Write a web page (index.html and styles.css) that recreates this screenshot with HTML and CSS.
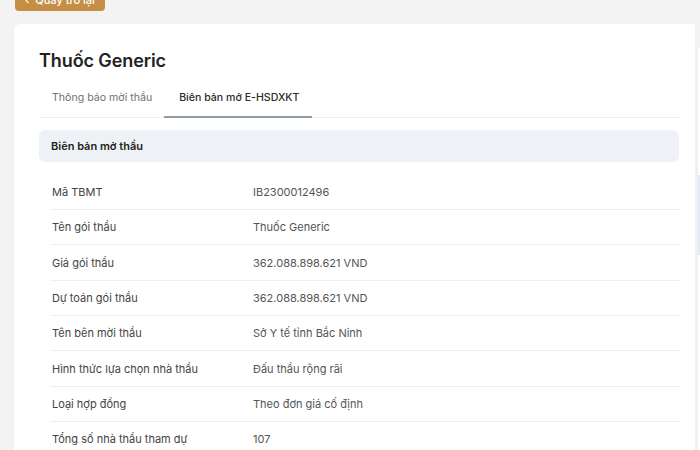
FILE: index.html
```html
<!DOCTYPE html>
<html>
<head>
    <title>Thuốc Generic - Biên bản mở thầu</title>
    <link rel="stylesheet" href="styles.css">
</head>
<body>
    <div class="page">
        <button class="back">&lsaquo;&nbsp; Quay trở lại</button>

        <div class="layout">
            <div class="card">
                <h1>Thuốc Generic</h1>

                <div class="tabs">
                    <div class="tab">Thông báo mời thầu</div>
                    <div class="tab active">Biên bản mở E-HSDXKT</div>
                </div>

                <div class="section-head">Biên bản mở thầu</div>

                <div class="rows">
                    <div class="row"><span class="label">Mã TBMT</span><span class="value">IB2300012496</span></div>
                    <div class="row"><span class="label">Tên gói thầu</span><span class="value">Thuốc Generic</span></div>
                    <div class="row"><span class="label">Giá gói thầu</span><span class="value">362.088.898.621 VND</span></div>
                    <div class="row"><span class="label">Dự toán gói thầu</span><span class="value">362.088.898.621 VND</span></div>
                    <div class="row"><span class="label">Tên bên mời thầu</span><span class="value">Sở Y tế tỉnh Bắc Ninh</span></div>
                    <div class="row"><span class="label">Hình thức lựa chọn nhà thầu</span><span class="value">Đấu thầu rộng rãi</span></div>
                    <div class="row"><span class="label">Loại hợp đồng</span><span class="value">Theo đơn giá cố định</span></div>
                    <div class="row"><span class="label">Tổng số nhà thầu tham dự</span><span class="value">107</span></div>
                </div>
            </div>

            <div class="aside">
                <div class="aside-box"></div>
            </div>
        </div>
    </div>
</body>
</html>
```

FILE: styles.css
```css
body { margin: 0; background: #f3f3f3; font-family: Inter, "Noto Sans", sans-serif; color: #333; overflow: hidden; }
.page { padding-left: 14px; }
.back { display: block; margin: -17px 0 0 1px; width: 90px; height: 28px; background: #c48e45; color: #fff; border: none; border-radius: 4px; font-family: inherit; font-size: 11px; font-weight: 500; text-align: left; padding: 6px 10px 0 10px; }
.layout { display: flex; gap: 2px; margin-top: 13px; align-items: flex-start; }
.card { flex: 0 0 681px; background: #fff; border-radius: 6px 0 0 0; padding: 25px 0 0 25px; box-sizing: border-box; height: 440px; box-shadow: 0 0 3px rgba(0,0,0,0.03); }
h1 { margin: 0; font-size: 18px; line-height: 24px; font-weight: 600; color: #222; letter-spacing: -0.1px; }
.tabs { display: flex; margin-top: 6.5px; width: 641px; border-bottom: 1px solid #eeeff1; }
.tab { padding: 10px 12px 10px 13px; font-size: 10.6px; line-height: 16px; color: #707070; border-bottom: 2px solid transparent; margin-bottom: -1px; }
.tab.active { color: #2c2c2c; font-weight: 500; border-bottom-color: #8e9aa6; padding: 10px 12px 10px 15px; }
.section-head { margin-top: 12px; width: 640px; height: 32px; box-sizing: border-box; background: #eef2f6; border-radius: 6px; padding-left: 12px; display: flex; align-items: center; font-size: 11px; font-weight: 600; color: #222; }
.rows { margin: 13.4px 0 0 11px; width: 630px; }
.row { display: flex; align-items: center; height: 35.3px; box-sizing: border-box; border-bottom: 1px solid #efefef; font-size: 11px; }
.label { width: 201px; padding-left: 2px; color: #444; }
.value { color: #555; }
.aside { flex: 0 0 200px; margin-top: 24px; height: 420px; background: #fff; border-left: 1px solid #ececec; }
.aside-box { margin-top: 127px; height: 80px; border-left: 2px solid #e3ebf7; background: #fbfcff; }
```
